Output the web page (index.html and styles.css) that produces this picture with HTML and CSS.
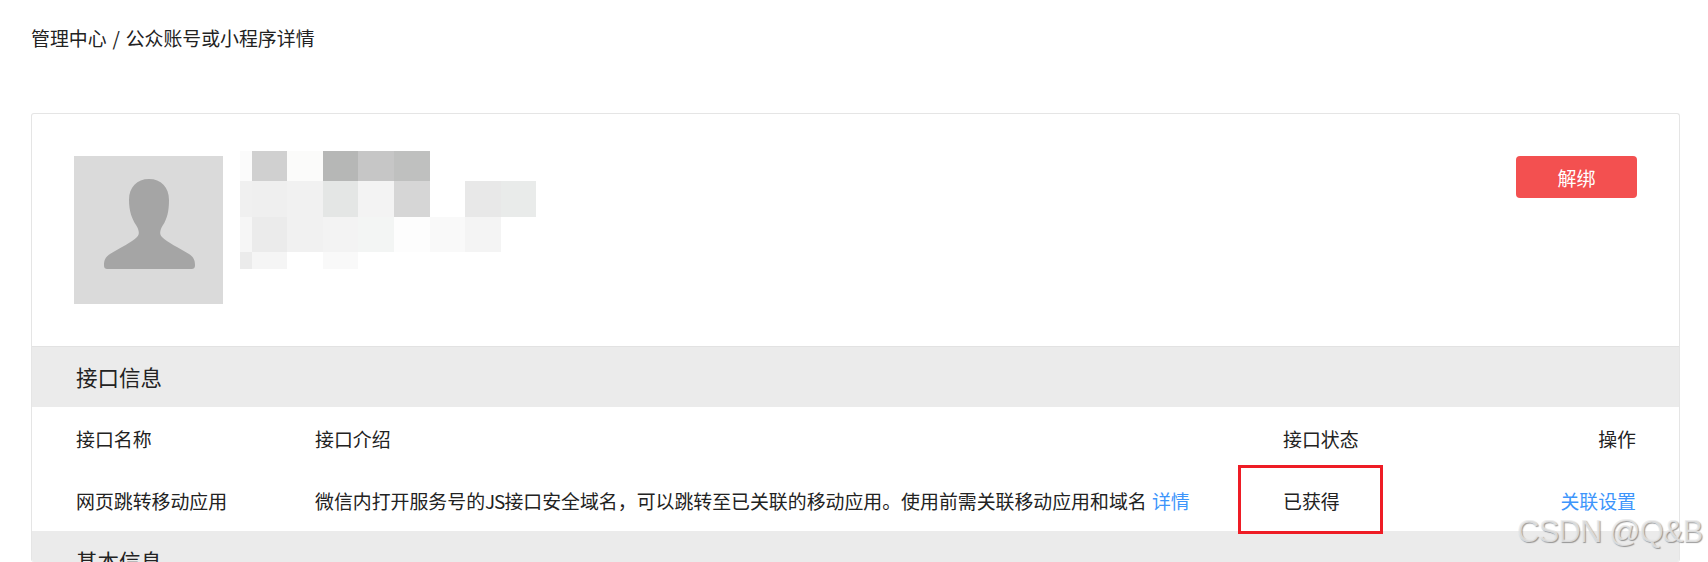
FILE: index.html
```html
<!DOCTYPE html>
<html lang="zh-CN">
<head>
    <meta charset="UTF-8">
    <meta name="viewport" content="width=device-width, initial-scale=1.0">
    <title>公众账号或小程序详情</title>
    <link rel="stylesheet" href="styles.css">
</head>
<body>
    <div class="breadcrumb">管理中心 / 公众账号或小程序详情</div>

    <div class="card">
        <div class="account">
            <div class="avatar">
                <svg width="149" height="148" viewBox="0 0 149 148">
                    <path fill="#a5a5a5" d="M75 23C63 23 55 31 55 44C55 55 58 63 62 69C65 74 66 78 63 81C58 86 46 92 36 98C31 101 30 105 30 109C30 112 31 113 34 113L117 113C120 113 121 112 121 109C121 105 120 101 115 98C105 92 93 86 88 81C85 78 86 74 89 69C93 63 95 55 95 44C95 31 87 23 75 23Z"/>
                </svg>
            </div>
            <!-- nome da conta borrado no original -->
            <svg class="blurred" width="296" height="118" viewBox="0 0 296 118">
                <rect x="0" y="0" width="12" height="30" fill="#fbfbfb"/>
                <rect x="12" y="0" width="35" height="30" fill="#d0d0d0"/>
                <rect x="47" y="0" width="36" height="30" fill="#fbfbfa"/>
                <rect x="83" y="0" width="35" height="30" fill="#b6b7b6"/>
                <rect x="118" y="0" width="36" height="30" fill="#c6c6c6"/>
                <rect x="154" y="0" width="36" height="30" fill="#bfc0bf"/>
                <rect x="0" y="30" width="12" height="36" fill="#f0f0f0"/>
                <rect x="12" y="30" width="35" height="36" fill="#efefef"/>
                <rect x="47" y="30" width="36" height="36" fill="#f1f1f1"/>
                <rect x="83" y="30" width="35" height="36" fill="#e4e6e5"/>
                <rect x="118" y="30" width="36" height="36" fill="#f3f3f3"/>
                <rect x="154" y="30" width="36" height="36" fill="#d6d6d6"/>
                <rect x="225" y="30" width="36" height="36" fill="#e8e8e8"/>
                <rect x="261" y="30" width="35" height="36" fill="#e9ebea"/>
                <rect x="0" y="66" width="12" height="35" fill="#f6f6f6"/>
                <rect x="12" y="66" width="35" height="35" fill="#ebebeb"/>
                <rect x="47" y="66" width="36" height="35" fill="#f1f1f1"/>
                <rect x="83" y="66" width="35" height="35" fill="#f3f3f3"/>
                <rect x="118" y="66" width="36" height="35" fill="#f3f5f4"/>
                <rect x="154" y="66" width="36" height="35" fill="#fdfdfd"/>
                <rect x="190" y="66" width="35" height="35" fill="#f9f9f9"/>
                <rect x="225" y="66" width="36" height="35" fill="#f4f4f4"/>
                <rect x="0" y="101" width="12" height="17" fill="#ebebeb"/>
                <rect x="12" y="101" width="35" height="17" fill="#f5f5f5"/>
                <rect x="83" y="101" width="35" height="17" fill="#f9f9f9"/>
            </svg>
            <button class="btn-unbind">解绑</button>
        </div>

        <div class="section-title">接口信息</div>
        <div class="api-row">
            <div>接口名称</div>
            <div>接口介绍</div>
            <div>接口状态</div>
            <div class="op">操作</div>
        </div>
        <div class="api-row">
            <div>网页跳转移动应用</div>
            <div>微信内打开服务号的<span class="latin">JS</span>接口安全域名，可以跳转至已关联的移动应用。使用前需关联移动应用和域名 <a href="#" class="detail">详情</a></div>
            <div>已获得</div>
            <div class="op"><a href="#">关联设置</a></div>
        </div>
        <div class="section-title">基本信息</div>
    </div>

    <!-- marcação vermelha e marca d'água por cima da página -->
    <div class="highlight"></div>
    <div class="watermark">CSDN @Q&amp;B</div>
</body>
</html>
```

FILE: styles.css
```css
* {
    margin: 0;
    padding: 0;
    box-sizing: border-box;
}

html, body {
    height: 562px;
    overflow: hidden;
}

body {
    position: relative;
    background: #fff;
    color: #222;
    font-family: "Noto Sans CJK SC", "Noto Sans", sans-serif;
    font-size: 18.9px;
    padding: 24px 28px 0 31px;
}

.breadcrumb {
    height: 28px;
    line-height: 28px;
    margin-bottom: 61px;
    word-spacing: 1.6px;
}

.card {
    border: 1px solid #e5e5e5;
    border-radius: 3px;
    border-bottom: 0;
    height: 449px;
    overflow: hidden;
}

.account {
    display: flex;
    align-items: flex-start;
    height: 233px;
    padding: 42px 42px 0;
    border-bottom: 1px solid #e2e2e2;
}

.avatar {
    width: 149px;
    height: 148px;
    background: #dadada;
}

.avatar svg {
    display: block;
}

.blurred {
    display: block;
    margin: -5px 0 0 17px;
}

.btn-unbind {
    width: 121px;
    height: 42px;
    margin-left: auto;
    background: #f35050;
    color: #fff;
    border: 0;
    border-radius: 4px;
    font-family: inherit;
    font-size: 19px;
}

.section-title {
    height: 60px;
    line-height: 60px;
    padding-left: 44px;
    background: #ebebeb;
    font-size: 21.5px;
}

.api-row {
    display: grid;
    grid-template-columns: 239px 968px 1fr auto;
    align-items: center;
    height: 62px;
    padding: 0 43px 0 44px;
}

.latin {
    letter-spacing: -1px;
}

.detail {
    margin-left: 1px;
}

.op {
    text-align: right;
}

a {
    color: #3d95fb;
    text-decoration: none;
}

.highlight {
    position: absolute;
    left: 1238px;
    top: 465px;
    width: 145px;
    height: 69px;
    border: 3px solid #ee1c25;
}

.watermark {
    position: absolute;
    left: 1517px;
    top: 513px;
    font-family: "Liberation Sans", sans-serif;
    font-size: 31px;
    line-height: 38px;
    letter-spacing: -0.9px;
    white-space: nowrap;
    color: rgba(235, 235, 235, 0.8);
    text-shadow: 1px 1px 1px rgba(90, 90, 90, 0.6);
}
```
